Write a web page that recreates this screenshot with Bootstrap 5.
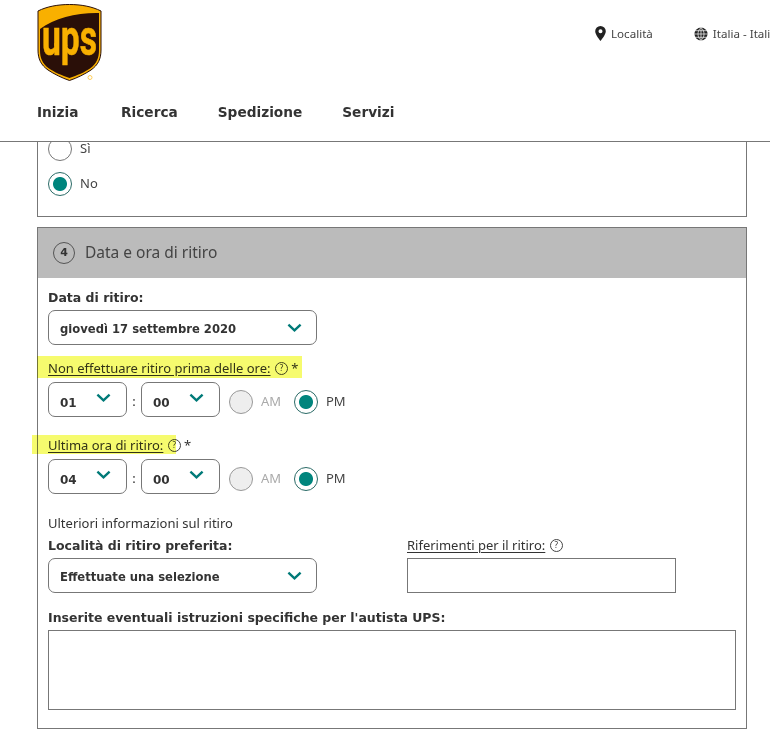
<!DOCTYPE html>
<html lang="it">
<head>
  <meta charset="utf-8">
  <title>UPS - Data e ora di ritiro</title>
  <link href="https://cdn.jsdelivr.net/npm/bootstrap@5.3.0/dist/css/bootstrap.min.css" rel="stylesheet">
  <style>
    html, body { height: 735px; overflow: hidden; }
    body { font-family: "Noto Sans", Tahoma, sans-serif; font-size: 13px; color: #333; background: #fff; }

    /* header */
    .site-header { height: 142px; border-bottom: 1px solid #777; padding: 4px 0 0 37px; overflow: hidden; }
    .logo-box { width: 65px; height: 77px; display: block; }
    .util-links { padding-top: 21px; font-size: 11.6px; white-space: nowrap; margin-left: 493px; gap: 41px; color: #444; }
    .util-links span { display: inline-flex; align-items: center; gap: 5px; }
    .main-links { gap: 40px; margin-top: 21px; font-family: "DejaVu Sans", sans-serif; font-size: 13.7px; font-weight: 700; color: #333; }
    .main-links span:first-child { width: 44px; }

    /* boxes */
    .page-main { width: 710px; margin-left: 37px; }
    .box-top { height: 75px; border: 1px solid #777; border-top: 0; overflow: hidden; padding: 0 10px; }
    .box-top .opt-row:first-child { margin-top: -5px; }
    .opt-row { height: 24px; margin-bottom: 11px; }
    .box-form { margin-top: 10px; border: 1px solid #777; height: 502px; }
    .box-head { height: 50px; background: #bbb; padding-left: 15px; gap: 10px; font-size: 15.5px; color: #444; }
    .step-num { width: 22px; height: 22px; border: 1px solid #555; border-radius: 50%; font-family: "DejaVu Sans", sans-serif; font-size: 11px; font-weight: 700; color: #333; }
    .box-body { padding: 12px 10px 0; }

    /* labels */
    .lbl-bold { font-family: "DejaVu Sans", sans-serif; font-size: 12.5px; font-weight: 700; line-height: 16px; margin: 0; display: block; }
    .lbl-low { padding-top: 1px; margin-bottom: 4px; }
    .lbl-line { height: 16px; line-height: 16px; position: relative; }
    .lbl-line u { text-underline-offset: 2px; }
    .help-dot { display: inline-flex; width: 13px; height: 13px; border: 1px solid #444; border-radius: 50%; font-size: 8px; line-height: 1; align-items: center; justify-content: center; vertical-align: 2px; margin-left: 1px; }
    .hl-over { position: absolute; background: #f6fb6e; mix-blend-mode: multiply; }
    .hl-one { left: -11px; top: -4px; width: 265px; height: 22px; }
    .hl-two { left: -16px; top: -2px; width: 144px; height: 19px; }

    /* controls */
    .ups-select.form-select { height: 35px; border: 1px solid #777; border-radius: 7px; padding: 5px 30px 0 11px; font-family: "DejaVu Sans", sans-serif; font-size: 11.6px; font-weight: 700; color: #333; box-shadow: none;
      background-image: url("data:image/svg+xml,%3Csvg xmlns='http://www.w3.org/2000/svg' viewBox='0 0 16 10'%3E%3Cpath fill='none' stroke='%23007a78' stroke-width='2.6' d='M1.5 1.5 8 7.5l6.5-6'/%3E%3C/svg%3E");
      background-size: 15px 10px; background-position: right 14px top 12px; }
    .sel-wide { width: 269px; }
    .ups-select.sel-time { width: 79px; padding-top: 6px; font-size: 12px; background-position: right 15px top 10px; }
    .time-sep { width: 14px; text-align: center; padding-top: 10px; }
    .time-radios { margin: 8px 0 0 9px; }
    .ups-radio.form-check-input { width: 24px; height: 24px; margin: 0; flex: none; border: 1px solid #777; background-color: #fff; box-shadow: none; opacity: 1; }
    .ups-radio.form-check-input:checked { background-color: #fff; background-image: radial-gradient(circle, #00857d 0, #00857d 6.5px, #fff 7.5px); border-color: #2b6b67; }
    .ups-radio.form-check-input:disabled { background-color: #eee; border-color: #999; }
    .radio-txt { font-size: 13px; color: #444; margin-left: 8px; }
    .radio-off { color: #aaa; width: 33px; }
    .plain-field { display: block; border: 1px solid #777; border-radius: 0; background: #fff; padding: 4px 8px; outline: 0; }
    .field-ref { width: 269px; height: 35px; }
    .field-notes { width: 688px; height: 80px; resize: none; }
    .col-ref { margin-left: 90px; }
    .gap-5px { margin-bottom: 5px; }
  </style>
</head>
<body>

<!-- Header -->
<header class="site-header">
  <div class="d-flex">
    <svg class="logo-box flex-shrink-0" viewBox="0 0 65 77" aria-label="UPS">
      <path d="M32.5 0.5C21 0.5 10 2.5 1 7v39c0 9 3 15 10 20 6 4 14 8 21.5 10.500C40 74 48 70 54 66c7-5 10-11 10-20V7C55 2.500 44 0.500 32.500 0.500z" fill="#f9b000" stroke="#2a0f08" stroke-width="1"/>
      <path d="M62 9V46c0 8-2.500 14-9 18.500-5 3.500-13 7-20.500 9.500-7.500-2.500-15.500-6-20.500-9.500C5.500 60 3 54 3 46V25C18 14 40 8.500 62 9z" fill="#2a0f08"/>
      <text x="5" y="51" font-family="Roboto, 'Liberation Sans', sans-serif" font-weight="700" font-size="50" fill="#f9b000" stroke="#f9b000" stroke-width=".6" textLength="55" lengthAdjust="spacingAndGlyphs">ups</text>
      <circle cx="53" cy="73.500" r="2" fill="none" stroke="#ffcf5a" stroke-width="1"/>
    </svg>
    <div class="util-links d-flex align-items-start">
      <span>
        <svg width="11" height="15" viewBox="0 0 11 15"><path fill-rule="evenodd" fill="#222" d="M5.500 0A5.300 5.300 0 0 0 .2 5.300C.2 9 5.500 15 5.500 15s5.300-6 5.300-9.700A5.300 5.300 0 0 0 5.500 0zm0 3.300a2 2 0 1 1 0 4 2 2 0 0 1 0-4z"/></svg>
        Località
      </span>
      <span>
        <svg width="14" height="14" viewBox="0 0 14 14"><circle cx="7" cy="7" r="6.500" fill="#222"/><path fill="none" stroke="#fff" stroke-width=".7" d="M.5 7h13M1.500 3.700h11M1.500 10.300h11M7 .5v13M7 .5C3 3.500 3 10.500 7 13.500M7 .5c4 3 4 10 0 13"/></svg>
        Italia - Italiano
      </span>
    </div>
  </div>
  <nav class="main-links d-flex">
    <span>Inizia</span>
    <span>Ricerca</span>
    <span>Spedizione</span>
    <span>Servizi</span>
  </nav>
</header>

<main class="page-main">
  <!-- Previous section, scrolled under the header -->
  <section class="box-top">
    <div class="opt-row d-flex align-items-center">
      <input class="form-check-input ups-radio" type="radio" name="prev">
      <span class="radio-txt">Sì</span>
    </div>
    <div class="opt-row d-flex align-items-center">
      <input class="form-check-input ups-radio" type="radio" name="prev" checked>
      <span class="radio-txt">No</span>
    </div>
  </section>

  <!-- Section 4 -->
  <section class="box-form">
    <div class="box-head d-flex align-items-center">
      <span class="step-num d-flex align-items-center justify-content-center">4</span>
      <span>Data e ora di ritiro</span>
    </div>
    <div class="box-body">
      <label class="lbl-bold mb-1">Data di ritiro:</label>
      <select class="form-select ups-select sel-wide"><option>giovedì 17 settembre 2020</option></select>

      <div class="lbl-line" style="margin-top:15px">
        <u>Non effettuare ritiro prima delle ore:</u> <span class="help-dot">?</span> *
        <span class="hl-over hl-one"></span>
      </div>
      <div class="d-flex align-items-start" style="margin-top:6px">
        <select class="form-select ups-select sel-time"><option>01</option></select>
        <span class="time-sep">:</span>
        <select class="form-select ups-select sel-time"><option>00</option></select>
        <div class="time-radios d-flex align-items-center">
          <input class="form-check-input ups-radio" type="radio" disabled>
          <span class="radio-txt radio-off">AM</span>
          <input class="form-check-input ups-radio" type="radio" checked>
          <span class="radio-txt">PM</span>
        </div>
      </div>

      <div class="lbl-line" style="margin-top:20px">
        <u>Ultima ora di ritiro:</u> <span class="help-dot">?</span> *
        <span class="hl-over hl-two"></span>
      </div>
      <div class="d-flex align-items-start" style="margin-top:6px">
        <select class="form-select ups-select sel-time"><option>04</option></select>
        <span class="time-sep">:</span>
        <select class="form-select ups-select sel-time"><option>00</option></select>
        <div class="time-radios d-flex align-items-center">
          <input class="form-check-input ups-radio" type="radio" disabled>
          <span class="radio-txt radio-off">AM</span>
          <input class="form-check-input ups-radio" type="radio" checked>
          <span class="radio-txt">PM</span>
        </div>
      </div>

      <div class="lbl-line" style="margin-top:21px">Ulteriori informazioni sul ritiro</div>
      <div class="d-flex" style="margin-top:6px">
        <div class="sel-wide">
          <label class="lbl-bold lbl-low">Località di ritiro preferita:</label>
          <select class="form-select ups-select sel-wide"><option>Effettuate una selezione</option></select>
        </div>
        <div class="col-ref">
          <div class="lbl-line gap-5px"><u>Riferimenti per il ritiro:</u> <span class="help-dot">?</span></div>
          <input class="plain-field field-ref" type="text">
        </div>
      </div>
      <label class="lbl-bold lbl-low" style="margin-top:16px">Inserite eventuali istruzioni specifiche per l'autista UPS:</label>
      <textarea class="plain-field field-notes"></textarea>
    </div>
  </section>
</main>

<script src="https://cdn.jsdelivr.net/npm/bootstrap@5.3.0/dist/js/bootstrap.bundle.min.js"></script>
</body>
</html>
